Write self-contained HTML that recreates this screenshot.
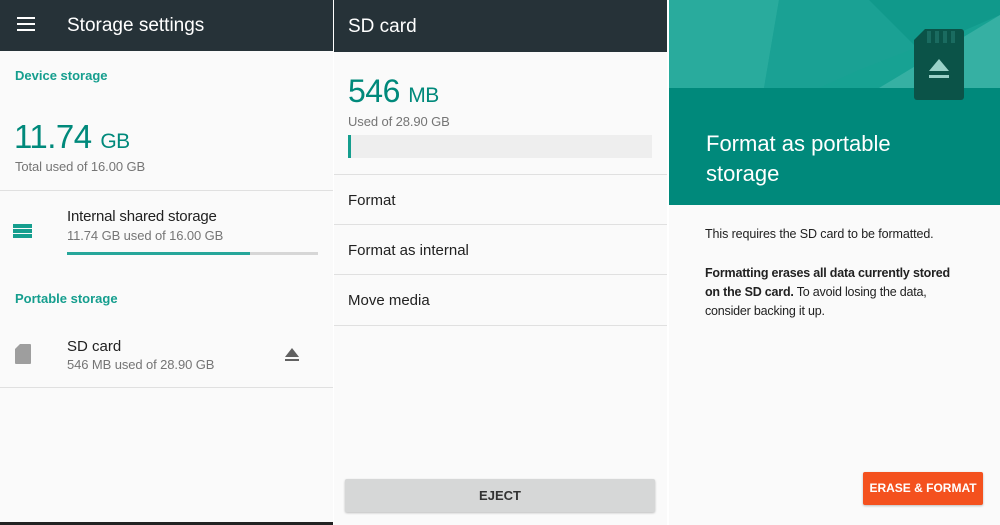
<!DOCTYPE html>
<html><head><meta charset="utf-8"><style>
*{margin:0;padding:0;box-sizing:border-box}
body{width:1000px;height:525px;background:#fff;font-family:"Liberation Sans",sans-serif;position:relative;overflow:hidden}
.p{position:absolute;top:0;height:525px;background:#fafafa;overflow:hidden}
.hdr{position:absolute;left:0;right:0;top:0;background:#263238;color:#fff;font-size:19px}
.t{position:absolute;white-space:nowrap}
.hr{position:absolute;height:1px;background:#e0e0e0}
.teal{color:#00897b}
</style></head><body>
<!-- panel 1 -->
<div class="p" style="left:0;width:333px">
 <div class="hdr" style="height:51px">
  <div style="position:absolute;left:17px;top:17px;width:18px;height:2px;background:#fff;box-shadow:0 6px 0 #fff,0 12px 0 #fff"></div>
  <div class="t" style="left:67px;top:15px">Storage settings</div>
 </div>
 <div class="t teal" style="left:15px;top:68px;font-size:13px;font-weight:bold;color:#159e8e">Device storage</div>
 <div class="t teal" style="left:14px;top:118px;font-size:33px;letter-spacing:-0.5px">11.74 <span style="font-size:21px">GB</span></div>
 <div class="t" style="left:15px;top:159px;font-size:13px;color:#757575;letter-spacing:-0.1px">Total used of 16.00 GB</div>
 <div class="hr" style="left:0;width:333px;top:190px"></div>
 <div style="position:absolute;left:13px;top:224px;width:19px;height:4px;background:#159e8e;box-shadow:0 5px 0 #159e8e,0 10px 0 #159e8e"></div>
 <div class="t" style="left:67px;top:208px;font-size:15px;color:#212121;letter-spacing:-0.2px">Internal shared storage</div>
 <div class="t" style="left:67px;top:228px;font-size:13px;color:#757575;letter-spacing:-0.1px">11.74 GB used of 16.00 GB</div>
 <div style="position:absolute;left:67px;top:252px;width:251px;height:3px;background:#d6d6d6"><div style="width:183px;height:3px;background:#26a69a"></div></div>
 <div class="t" style="left:15px;top:291px;font-size:13px;font-weight:bold;color:#159e8e">Portable storage</div>
 <svg style="position:absolute;left:15px;top:344px" width="16" height="20" viewBox="0 0 16 20"><path d="M5 0H15a1 1 0 0 1 1 1V19a1 1 0 0 1-1 1H1a1 1 0 0 1-1-1V5z" fill="#9e9e9e"/></svg>
 <div class="t" style="left:67px;top:338px;font-size:15px;color:#212121">SD card</div>
 <div class="t" style="left:67px;top:357px;font-size:13px;color:#757575;letter-spacing:-0.1px">546 MB used of 28.90 GB</div>
 <svg style="position:absolute;left:284px;top:348px" width="16" height="14" viewBox="0 0 16 14"><path d="M8 0L15 9H1z" fill="#616161"/><rect x="1" y="11" width="14" height="2" fill="#616161"/></svg>
 <div class="hr" style="left:0;width:333px;top:387px"></div>
 <div style="position:absolute;left:0;top:522px;width:333px;height:3px;background:#222"></div>
</div>
<!-- panel 2 -->
<div class="p" style="left:334px;width:333px">
 <div class="hdr" style="height:52px"><div class="t" style="left:14px;top:16px">SD card</div></div>
 <div class="t teal" style="left:14px;top:73px;font-size:32px;letter-spacing:-0.5px">546 <span style="font-size:21px">MB</span></div>
 <div class="t" style="left:14px;top:114px;font-size:13px;color:#757575;letter-spacing:-0.1px">Used of 28.90 GB</div>
 <div style="position:absolute;left:14px;top:135px;width:304px;height:23px;background:#eeeeee"><div style="width:3px;height:23px;background:#159e8e"></div></div>
 <div class="hr" style="left:0;width:333px;top:174px"></div>
 <div class="t" style="left:14px;top:192px;font-size:15px;color:#212121">Format</div>
 <div class="hr" style="left:0;width:333px;top:224px"></div>
 <div class="t" style="left:14px;top:242px;font-size:15px;color:#212121">Format as internal</div>
 <div class="hr" style="left:0;width:333px;top:274px"></div>
 <div class="t" style="left:14px;top:292px;font-size:15px;color:#212121">Move media</div>
 <div class="hr" style="left:0;width:333px;top:325px"></div>
 <div style="position:absolute;left:11px;top:479px;width:310px;height:33px;background:#d6d7d7;border-radius:2px;box-shadow:0 1px 2px rgba(0,0,0,.25);text-align:center;line-height:33px;font-size:13px;font-weight:bold;color:#333">EJECT</div>
</div>
<!-- panel 3 -->
<div class="p" style="left:669px;width:331px">
 <svg style="position:absolute;left:0;top:0" width="331" height="205">
  <rect width="331" height="205" fill="#00897b"/>
  <rect width="331" height="88" fill="#17a293"/>
  <polygon points="0,0 110,0 95,88 0,88" fill="#29ab9d"/>
  <polygon points="110,0 331,0 331,15 190,70 150,88 95,88" fill="#1aa194"/>
  <polygon points="200,0 331,0 331,15 250,50" fill="#10998b"/>
  <polygon points="331,15 331,88 210,88" fill="#36b0a3"/>
  <path d="M256 29H292a3 3 0 0 1 3 3V97a3 3 0 0 1-3 3H248a3 3 0 0 1-3-3V40z" fill="#0b5348"/>
  <g fill="#1a6b60"><rect x="258" y="31" width="4" height="12"/><rect x="266" y="31" width="4" height="12"/><rect x="274" y="31" width="4" height="12"/><rect x="282" y="31" width="4" height="12"/></g>
  <path d="M270 59L280 71H260z" fill="#9ad1c8"/><rect x="260" y="75" width="20" height="3" fill="#9ad1c8"/>
 </svg>
 <div class="t" style="left:37px;top:129px;font-size:22px;color:#fff;line-height:30px">Format as portable<br>storage</div>
 <div class="t" style="left:36px;top:227px;font-size:12.5px;color:#212121;letter-spacing:-0.1px">This requires the SD card to be formatted.</div>
 <div class="t" style="left:36px;top:264px;font-size:12.5px;color:#212121;line-height:19px;letter-spacing:-0.2px"><b>Formatting erases all data currently stored<br>on the SD card.</b> To avoid losing the data,<br>consider backing it up.</div>
 <div style="position:absolute;left:194px;top:472px;width:120px;height:33px;background:#f4511e;color:#fff;font-size:12px;font-weight:bold;text-align:center;line-height:33px;border-radius:2px;box-shadow:0 1px 2px rgba(0,0,0,.25)">ERASE &amp; FORMAT</div>
</div>
</body></html>
